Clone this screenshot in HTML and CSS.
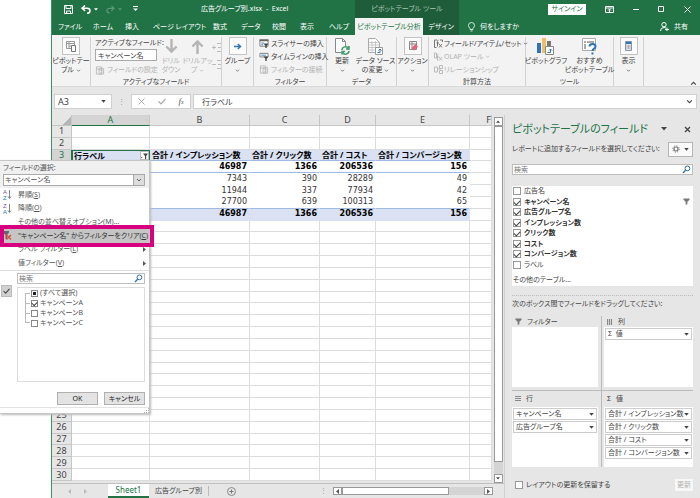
FILE: index.html
```html
<!DOCTYPE html>
<html lang="ja">
<head>
<meta charset="utf-8">
<title>広告グループ別.xlsx - Excel</title>
<link rel="stylesheet" href="styles.css">
</head>
<body>
<svg class="defs" aria-hidden="true">
  <symbol id="chev" viewBox="0 0 6 4"><path d="M1 1l2 2 2-2" fill="none" stroke="currentColor" stroke-width=".9"/></symbol>
  <symbol id="tri" viewBox="0 0 6 4"><path d="M0 0h6L3 3.5z" fill="currentColor"/></symbol>
  <symbol id="lens" viewBox="0 0 9 9"><circle cx="5.4" cy="3.4" r="2.4" fill="none" stroke="#2f6db5"/><path d="M3.6 5.2L1 8" stroke="#2f6db5" stroke-width="1.3"/></symbol>
  <symbol id="funnel" viewBox="0 0 8 8"><path d="M.5.5h7v1.4L5 4.2V7.500H3V4.200L.5 1.900z" fill="#777"/></symbol>
  <symbol id="arrowDown" viewBox="0 0 14 16"><path d="M7 0v13M1.500 8L7 13.500 12.500 8" fill="none" stroke="#b5b5b5" stroke-width="2.600"/></symbol>
  <symbol id="slicer" viewBox="0 0 10 10"><path d="M.5 1h9v7h-9z" fill="#fff" stroke="#777"/><path d="M0 .5h10v2H0z" fill="#666"/><path d="M2 4.500h3M2 6.500h2" stroke="#2f75b5"/><path d="M4.500 5H10L8 7.500V10H6.500V7.500z" fill="#444"/></symbol>
  <symbol id="timeline" viewBox="0 0 10 10"><path d="M.5 1.500h9v4h-9z" fill="#fff" stroke="#777"/><path d="M2 3.500h5" stroke="#2f75b5"/><path d="M4.500 5H10L8 7.500V10H6.500V7.500z" fill="#444"/></symbol>
  <symbol id="faded" viewBox="0 0 10 10"><path d="M1 1h6v8H1zM4 3h5v6H4zM1 3.500h6M5.500 5h2M5.500 7h2" fill="none" stroke="#b9b9b9"/></symbol>
</svg>
<div class="gutter"></div>
<div class="window">
  <header class="head">
    <div class="title-left">
      <div class="quick">
        <button aria-label="上書き保存"><svg width="9" height="9" viewBox="0 0 9 9"><path d="M.5.5h8v8h-8zM2 1v2.500h5V1M2.500 8.500V6h4v2.500" fill="none" stroke="#fff"/></svg></button>
        <button aria-label="元に戻す"><svg width="10" height="9" viewBox="0 0 10 9"><path d="M4 .5L1 3.200l3 2.700M1.500 3.200H6q3 0 3 2.500T6 8.300" fill="none" stroke="#fff" stroke-width="1.500"/></svg><svg width="4" height="3" class="gap"><use href="#tri"/></svg></button>
        <button aria-label="やり直し" class="off"><svg width="9" height="9" viewBox="0 0 10 9"><path d="M6 .5l3 2.700-3 2.700M8.500 3.200H4q-3 0-3 2.500t3 2.600" fill="none" stroke="#5d9a78" stroke-width="1.300"/></svg><svg width="4" height="3" class="gap"><use href="#tri"/></svg></button>
        <button aria-label="カスタマイズ"><svg width="5" height="6" viewBox="0 0 5 6"><path d="M0 .5h5" stroke="#fff"/><path d="M0 2.500h5L2.500 5z" fill="#fff"/></svg></button>
      </div>
      <span>広告グループ別.xlsx&nbsp; - &nbsp;Excel</span>
    </div>
    <div class="title-context">ピボットテーブル ツール</div>
    <div class="title-right">
      <button class="signin">サインイン</button>
      <button aria-label="リボンの表示"><svg width="9" height="7" viewBox="0 0 9 7"><path d="M.5.5h8v6h-8zM.5 2h8M4.500 6V3M3 4.500L4.500 3 6 4.500" fill="none" stroke="#fff"/></svg></button>
      <button aria-label="最小化"><svg width="6" height="7" viewBox="0 0 6 7"><path d="M0 3.500h6" stroke="#fff"/></svg></button>
      <button aria-label="最大化"><svg width="7" height="7" viewBox="0 0 7 7"><path d="M.5.5h5v5h-5z" fill="none" stroke="#fff"/></svg></button>
      <button aria-label="閉じる"><svg width="7" height="7" viewBox="0 0 7 7"><path d="M.5.5l6 6M6.500.5l-6 6" stroke="#fff"/></svg></button>
    </div>
    <nav class="tabs">
      <button>ファイル</button><button>ホーム</button><button>挿入</button><button>ページ レイアウト</button><button>数式</button><button>データ</button><button>校閲</button><button>表示</button><button>ヘルプ</button>
    </nav>
    <nav class="tabs-context"><button class="on">ピボットテーブル分析</button><button>デザイン</button></nav>
    <div class="tabs-right">
      <button><svg width="7" height="10" viewBox="0 0 7 10"><path d="M2 6.500Q.5 5 .5 3.500a3 3 0 0 1 6 0Q6.500 5 5 6.500v1H2zM2.500 9h2" fill="none" stroke="#fff" stroke-width=".8"/></svg>何をしますか</button>
      <button><svg width="9" height="9" viewBox="0 0 9 9"><circle cx="4" cy="2.700" r="2.200" fill="none" stroke="#fff"/><path d="M.5 9Q.5 5.500 4 5.500q1.500 0 2 .7M5 7.500h4M7 5.500v4" fill="none" stroke="#fff"/></svg>共有</button>
    </div>
  </header>

  <section class="ribbon">
    <div class="group">
      <button class="big"><span class="frame"><svg width="11" height="11" viewBox="0 0 11 11"><path d="M.5.500h8v7h-8zM.5 2.500h8M3 .5v7M3 5h6" fill="none" stroke="#999"/><path d="M5.500 4.500h4v6h-4z" fill="#fff" stroke="#777"/></svg></span><span>ピボットテー<br>ブル <svg width="5" height="3"><use href="#chev"/></svg></span></button>
    </div>
    <div class="group">
      <div class="tools">
        <div class="stack active-field">
          <label for="af">アクティブなフィールド:</label>
          <input id="af" value="キャンペーン名">
          <button class="off"><svg width="10" height="9"><use href="#faded"/></svg>フィールドの設定</button>
        </div>
        <button class="big off"><span class="plain"><svg width="13" height="15"><use href="#arrowDown"/></svg></span><span>ドリル<br>ダウン</span></button>
        <button class="big off"><span class="plain"><svg class="flip" width="13" height="15"><use href="#arrowDown"/></svg></span><span>ドリルアッ<br>プ <svg width="5" height="3"><use href="#chev"/></svg></span></button>
        <div class="stack expand">
          <button aria-label="フィールドの展開"><svg width="9" height="9" viewBox="0 0 9 9"><path d="M5 .5h4M5 8.500h4M6 4.500h3M0 4.500h4M2 2.500v4" stroke="#bbb"/></svg></button>
          <button aria-label="フィールドの折りたたみ"><svg width="9" height="9" viewBox="0 0 9 9"><path d="M5 .5h4M5 8.500h4M6 4.500h3M0 4.500h4" stroke="#bbb"/></svg></button>
        </div>
      </div>
      <div class="name">アクティブなフィールド</div>
    </div>
    <div class="group">
      <button class="big"><span class="frame"><svg width="8" height="7" viewBox="0 0 8 7"><path d="M0 3.500h6M3.800 1l2.700 2.500L3.800 6" fill="none" stroke="#2f75b5" stroke-width="1.500"/></svg></span><span>グループ<br><svg width="5" height="3"><use href="#chev"/></svg></span></button>
    </div>
    <div class="group">
      <div class="stack list">
        <button><svg width="10" height="9"><use href="#slicer"/></svg>スライサーの挿入</button>
        <button><svg width="10" height="9"><use href="#timeline"/></svg>タイムラインの挿入</button>
        <button class="off"><svg width="10" height="9"><use href="#faded"/></svg>フィルターの接続</button>
      </div>
      <div class="name">フィルター</div>
    </div>
    <div class="group">
      <div class="tools data">
        <button class="big"><span class="plain"><svg width="16" height="17" viewBox="0 0 16 17"><path d="M1.500.5h7l3 3v11h-10z" fill="#fff" stroke="#888"/><path d="M8.500.5v3h3" fill="none" stroke="#888"/><path d="M7 8h9v9H7z" fill="#f3f3f3"/><path d="M8 12a3.500 3.500 0 0 1 6.500-1.500M15 13a3.500 3.500 0 0 1-6.500 1.500M15 8v3h-3M8 16.500v-3h3" fill="none" stroke="#3d9a68" stroke-width="1.500"/></svg></span><span>更新<br><svg width="5" height="3"><use href="#chev"/></svg></span></button>
        <button class="big"><span class="plain"><svg width="17" height="17" viewBox="0 0 17 17"><path d="M1.500.5h7l4 4v10h-11z" fill="#fff" stroke="#aaa"/><path d="M2 4.500h10M2 7h10M2 9.500h10M2 12h10M5 3v12M8.500 3v12" stroke="#bbb" stroke-width=".8"/><path d="M8.500 9.500h7v7h-7z" fill="#fff" stroke="#999"/><path d="M10.500 14.500h2.500v-3M11.500 12.500l1.500-1.500 1.500 1.500" fill="none" stroke="#2f75b5"/></svg></span><span>データ ソース<br>の変更 <svg width="5" height="3"><use href="#chev"/></svg></span></button>
      </div>
      <div class="name">データ</div>
    </div>
    <div class="group">
      <button class="big"><span class="frame"><svg width="10" height="10" viewBox="0 0 10 10"><path d="M1.500.500h7v8h-7zM1 3h8M4 1v8" fill="none" stroke="#888"/><path d="M3.500 7l4-4L10 5.500 6 9.500z" fill="#e8607a"/></svg></span><span>アクション<br><svg width="5" height="3"><use href="#chev"/></svg></span></button>
    </div>
    <div class="group">
      <div class="stack list calc">
        <button><svg width="9" height="9" viewBox="0 0 9 9"><path d="M.5 1v7.500h2M.5 1H3M4.500 1q-1 0-1 1.500v5M2.500 4h2.500M5 5l3 3.500M8 5L5 8.500M6 1h2.500v2" fill="none" stroke="#777"/></svg>フィールド/アイテム/セット <svg width="5" height="3"><use href="#chev"/></svg></button>
        <button class="off"><svg width="9" height="9" viewBox="0 0 9 9"><path d="M.5 1v5h2V1zM4.500 2q-1 0-1 1.500v5M2.500 5h2.500M5 5l3 3.500M8 5L5 8.500" fill="none" stroke="#bbb"/></svg>OLAP ツール <svg width="5" height="3"><use href="#chev"/></svg></button>
        <button class="off"><svg width="9" height="9" viewBox="0 0 9 9"><path d="M.5 2h3v5h-3zM5.500.5h3v3h-3zM5.500 5.500h3v3h-3zM3.500 4H7" fill="none" stroke="#bbb"/></svg>リレーションシップ</button>
      </div>
      <div class="name">計算方法</div>
    </div>
    <div class="group">
      <div class="tools charts">
        <button class="big"><span class="plain"><svg width="18" height="17" viewBox="0 0 18 17"><path d="M0 5h4v10H0z" fill="#2f75b5"/><path d="M5 0h4v15H5z" fill="#f0c068"/><path d="M10 3h4v5h-4z" fill="#777"/><path d="M8.500 8.500h8v8h-8z" fill="#fff" stroke="#888"/><path d="M10.500 14.500h3v-3M12 12.500l1.500-1.500 1.500 1.500" fill="none" stroke="#2f75b5"/></svg></span><span>ピボットグラフ</span></button>
        <button class="big"><span class="plain"><svg width="17" height="17" viewBox="0 0 17 17"><path d="M1.500.5h13v12h-13z" fill="#fff" stroke="#aaa"/><path d="M3 3h2v2H3zM6 3h7v2H6zM3 6h2v5H3z" fill="#aaa"/><path d="M8.500 8.500q0-2.500 3-2.500t3 2.500q0 1.300-1.500 2.200T11.500 13M11.500 14.500v2" fill="none" stroke="#2f75b5" stroke-width="2"/></svg></span><span>おすすめ<br>ピボットテーブル</span></button>
      </div>
      <div class="name">ツール</div>
    </div>
    <div class="group">
      <button class="big"><span class="frame"><svg width="7" height="10" viewBox="0 0 7 10"><path d="M.5.500h6v9h-6z" fill="#e4e8ee" stroke="#8794a6"/><path d="M1 1h5v2H1z" fill="#2f75b5"/><path d="M1.500 5h4M1.500 7h4" stroke="#777" stroke-dasharray="1 .5"/></svg></span><span>表示<br><svg width="5" height="3"><use href="#chev"/></svg></span></button>
    </div>
    <button class="collapse" aria-label="リボンを折りたたむ"><svg class="flip" width="7" height="5"><use href="#chev"/></svg></button>
  </section>

  <section class="formula">
    <div class="namebox"><input aria-label="名前ボックス" value="A3"><svg width="5" height="3"><use href="#tri"/></svg></div>
    <span class="dots">⋮</span>
    <div class="fx"><svg width="7" height="7" viewBox="0 0 7 7"><path d="M.5.5l6 6M6.500.5l-6 6" stroke="#aaa"/></svg><svg width="8" height="7" viewBox="0 0 8 7"><path d="M.5 3.500L3 6l4.500-5" fill="none" stroke="#aaa" stroke-width="1.200"/></svg><i>f<small>x</small></i></div>
    <div class="fbar"><input aria-label="数式バー" value="行ラベル"><svg width="7" height="5"><use href="#chev"/></svg></div>
  </section>

  <main class="work">
    <div class="sheet">
      <div class="cells">
        <table>
          <colgroup><col class="c0"><col class="ca"><col class="cb"><col class="cc"><col class="cd"><col class="ce"><col></colgroup>
          <thead><tr><th class="corner"></th><th class="sel">A</th><th>B</th><th>C</th><th>D</th><th>E</th><th class="cut">F</th></tr></thead>
          <tbody>
            <tr><th>1</th><td></td><td></td><td></td><td></td><td></td><td></td></tr>
            <tr><th>2</th><td></td><td></td><td></td><td></td><td></td><td></td></tr>
            <tr class="band"><th class="sel">3</th><td class="cursor"><div>行ラベル<button aria-label="フィルター"><svg width="7" height="6" viewBox="0 0 7 6"><path d="M0 4h1.500L.7 5.200zM2 .5h5L5.200 3v3H4V3z" fill="#444"/></svg></button></div></td><td>合計 / インプレッション数</td><td>合計 / クリック数</td><td>合計 / コスト</td><td>合計 / コンバージョン数</td><td></td></tr>
            <tr class="num sum"><th></th><td></td><td>46987</td><td>1366</td><td>206536</td><td>156</td><td></td></tr>
            <tr class="num"><th></th><td></td><td>7343</td><td>390</td><td>28289</td><td>49</td><td></td></tr>
            <tr class="num"><th></th><td></td><td>11944</td><td>337</td><td>77934</td><td>42</td><td></td></tr>
            <tr class="num last"><th></th><td></td><td>27700</td><td>639</td><td>100313</td><td>65</td><td></td></tr>
            <tr class="num band total"><th></th><td></td><td>46987</td><td>1366</td><td>206536</td><td>156</td><td></td></tr>
            <tr><th></th><td></td><td></td><td></td><td></td><td></td><td></td></tr>
            <tr><th></th><td></td><td></td><td></td><td></td><td></td><td></td></tr>
            <tr><th></th><td></td><td></td><td></td><td></td><td></td><td></td></tr>
            <tr><th></th><td></td><td></td><td></td><td></td><td></td><td></td></tr>
            <tr><th></th><td></td><td></td><td></td><td></td><td></td><td></td></tr>
            <tr><th></th><td></td><td></td><td></td><td></td><td></td><td></td></tr>
            <tr><th></th><td></td><td></td><td></td><td></td><td></td><td></td></tr>
            <tr><th></th><td></td><td></td><td></td><td></td><td></td><td></td></tr>
            <tr><th></th><td></td><td></td><td></td><td></td><td></td><td></td></tr>
            <tr><th></th><td></td><td></td><td></td><td></td><td></td><td></td></tr>
            <tr><th></th><td></td><td></td><td></td><td></td><td></td><td></td></tr>
            <tr><th></th><td></td><td></td><td></td><td></td><td></td><td></td></tr>
            <tr><th></th><td></td><td></td><td></td><td></td><td></td><td></td></tr>
            <tr><th></th><td></td><td></td><td></td><td></td><td></td><td></td></tr>
            <tr><th></th><td></td><td></td><td></td><td></td><td></td><td></td></tr>
            <tr><th></th><td></td><td></td><td></td><td></td><td></td><td></td></tr>
            <tr><th>25</th><td></td><td></td><td></td><td></td><td></td><td></td></tr>
            <tr><th>26</th><td></td><td></td><td></td><td></td><td></td><td></td></tr>
            <tr><th>27</th><td></td><td></td><td></td><td></td><td></td><td></td></tr>
            <tr><th>28</th><td></td><td></td><td></td><td></td><td></td><td></td></tr>
            <tr><th>29</th><td></td><td></td><td></td><td></td><td></td><td></td></tr>
            <tr><th>30</th><td></td><td></td><td></td><td></td><td></td><td></td></tr>
          </tbody>
        </table>
        <div class="vscroll">
          <button aria-label="上へ"><svg class="flip" width="4" height="3"><use href="#tri"/></svg></button>
          <div class="thumb"></div><div class="track"></div>
          <button aria-label="下へ"><svg width="4" height="3"><use href="#tri"/></svg></button>
        </div>
      </div>
      <div class="sheetbar">
        <button class="mini" aria-label="前のシート"><svg width="3" height="5" viewBox="0 0 3 5"><path d="M3 0v5L0 2.500z" fill="#bbb"/></svg></button>
        <button class="mini" aria-label="次のシート"><svg width="3" height="5" viewBox="0 0 3 5"><path d="M0 0v5l3-2.500z" fill="#bbb"/></svg></button>
        <button class="stab on">Sheet1</button>
        <button class="stab other">広告グループ別</button>
        <button class="add" aria-label="新しいシート"><svg width="9" height="9" viewBox="0 0 9 9"><circle cx="4.500" cy="4.500" r="4" fill="none" stroke="#888"/><path d="M4.500 2.500v4M2.500 4.500h4" stroke="#777"/></svg></button>
        <span class="dots">⋮</span>
        <div class="hscroll">
          <button aria-label="左へ"><svg width="3" height="5" viewBox="0 0 3 5"><path d="M3 0v5L0 2.500z" fill="#555"/></svg></button>
          <div class="thumb"></div><div class="track"></div>
          <button aria-label="右へ"><svg width="3" height="5" viewBox="0 0 3 5"><path d="M0 0v5l3-2.500z" fill="#555"/></svg></button>
        </div>
      </div>
    </div>

    <aside class="pane">
      <div class="pane-head">
        <h2>ピボットテーブルのフィールド</h2>
        <button aria-label="オプション"><svg width="6" height="4"><use href="#tri"/></svg></button>
        <button aria-label="閉じる"><svg width="7" height="7" viewBox="0 0 7 7"><path d="M1 1l5 5M6 1L1 6" stroke="#444" stroke-width="1.300"/></svg></button>
      </div>
      <div class="pane-sub">
        <span>レポートに追加するフィールドを選択してください:</span>
        <button class="gear" aria-label="ツール"><svg width="8" height="8" viewBox="0 0 8 8"><circle cx="4" cy="4" r="2" fill="none" stroke="#777" stroke-width="1.200"/><circle cx="4" cy="4" r="3.200" fill="none" stroke="#777" stroke-dasharray="1.300 1.200"/></svg><svg width="5" height="3"><use href="#tri"/></svg></button>
      </div>
      <div class="search"><input aria-label="フィールドの検索" placeholder="検索"><svg width="9" height="9"><use href="#lens"/></svg></div>
      <div class="fields">
        <div class="field-list">
          <label><input type="checkbox">広告名</label>
          <label class="b"><input type="checkbox" checked>キャンペーン名<svg width="7" height="7"><use href="#funnel"/></svg></label>
          <label class="b"><input type="checkbox" checked>広告グループ名</label>
          <label class="b"><input type="checkbox" checked>インプレッション数</label>
          <label class="b"><input type="checkbox" checked>クリック数</label>
          <label class="b"><input type="checkbox" checked>コスト</label>
          <label class="b"><input type="checkbox" checked>コンバージョン数</label>
          <label><input type="checkbox">ラベル</label>
        </div>
        <a href="#">その他のテーブル...</a>
      </div>
      <p class="hint">次のボックス間でフィールドをドラッグしてください:</p>
      <div class="areas">
        <section><h3><svg width="7" height="7"><use href="#funnel"/></svg>フィルター</h3><div class="box"></div></section>
        <section><h3><svg width="6" height="6" viewBox="0 0 6 6"><path d="M.5 0v6M2.500 0v6M4.500 0v6" stroke="#888" stroke-width="1.200"/></svg>列</h3><div class="box"><button><span>Σ&nbsp; 値</span><svg width="5" height="3"><use href="#tri"/></svg></button></div></section>
        <section><h3><svg width="6" height="6" viewBox="0 0 6 6"><path d="M0 .5h6M0 2.500h6M0 4.500h6" stroke="#888" stroke-width="1.200"/></svg>行</h3><div class="box"><button><span>キャンペーン名</span><svg width="5" height="3"><use href="#tri"/></svg></button><button><span>広告グループ名</span><svg width="5" height="3"><use href="#tri"/></svg></button></div></section>
        <section><h3><span>Σ</span>値</h3><div class="box"><button><span>合計 / インプレッション数</span><svg width="5" height="3"><use href="#tri"/></svg></button><button><span>合計 / クリック数</span><svg width="5" height="3"><use href="#tri"/></svg></button><button><span>合計 / コスト</span><svg width="5" height="3"><use href="#tri"/></svg></button><button><span>合計 / コンバージョン数</span><svg width="5" height="3"><use href="#tri"/></svg></button></div></section>
      </div>
      <div class="pane-foot"><label><input type="checkbox">レイアウトの更新を保留する</label><button disabled>更新</button></div>
    </aside>
  </main>
  <footer class="status"></footer>
</div>

<div class="menu">
  <div class="menu-head">
    <label for="fs">フィールドの選択:</label>
    <div class="combo"><select id="fs"><option>キャンペーン名</option></select><span><svg width="6" height="4"><use href="#chev"/></svg></span></div>
  </div>
  <div class="items">
    <button><svg width="9" height="11" viewBox="0 0 9 11"><text x="0" y="5" class="za">A</text><text x="0" y="11" class="zb">Z</text><path d="M6.500 1v8M5 7.500L6.500 9.500 8 7.500" fill="none" stroke="#777" stroke-width=".9"/></svg><span>昇順(<u>S</u>)</span></button>
    <button><svg width="9" height="11" viewBox="0 0 9 11"><text x="0" y="5" class="za">Z</text><text x="0" y="11" class="zb">A</text><path d="M6.500 1v8M5 7.500L6.500 9.500 8 7.500" fill="none" stroke="#777" stroke-width=".9"/></svg><span>降順(<u>O</u>)</span></button>
    <button><i></i><span>その他の並べ替えオプション(<u>M</u>)...</span></button>
    <button class="clear"><svg width="9" height="9" viewBox="0 0 9 9"><path d="M0 0h6v1.500L4 4v4H2.500V4L0 1.500z" fill="#666"/><path d="M3.500 4l4.500 4.500M8 4L3.500 8.500" stroke="#d8503a" stroke-width="1.300"/></svg><span>"キャンペーン名" からフィルターをクリア(<u>C</u>)</span></button>
    <button><i></i><span>ラベル フィルター(<u>L</u>)</span><svg class="sub" width="3" height="5" viewBox="0 0 3 5"><path d="M0 0v5l3-2.500z" fill="#555"/></svg></button>
    <button><i></i><span>値フィルター(<u>V</u>)</span><svg class="sub" width="3" height="5" viewBox="0 0 3 5"><path d="M0 0v5l3-2.500z" fill="#555"/></svg></button>
  </div>
  <div class="picker">
    <span class="tick"><svg width="7" height="6" viewBox="0 0 8 7"><path d="M.5 3.500L3 6l4.500-5" fill="none" stroke="#444" stroke-width="1.200"/></svg></span>
    <div class="picker-main">
      <div class="search"><input aria-label="項目の検索" placeholder="検索"><svg width="9" height="9"><use href="#lens"/></svg></div>
      <div class="tree">
        <label class="root"><input type="checkbox" class="mixed">(すべて選択)</label>
        <label><input type="checkbox" checked>キャンペーンA</label>
        <label><input type="checkbox">キャンペーンB</label>
        <label><input type="checkbox">キャンペーンC</label>
      </div>
      <div class="actions"><button>OK</button><button>キャンセル</button></div>
    </div>
  </div>
  <div class="grip"><svg width="5" height="5" viewBox="0 0 5 5"><path d="M4 0h1v1H4zM2 2h1v1H2zM4 2h1v1H4zM0 4h1v1H0zM2 4h1v1H2zM4 4h1v1H4z" fill="#aaa"/></svg></div>
</div>
</body>
</html>
```
FILE: styles.css
```css
* { box-sizing: border-box; }
body {
  margin: 0;
  min-height: 100vh;
  display: flex;
  position: relative;
  background: #fff;
  color: #444;
  font: 7px/10px "Noto Sans", "Noto Sans CJK JP", sans-serif;
  font-feature-settings: "palt";
}
.defs { position: absolute; width: 0; height: 0; }
button, input, select { font: inherit; font-feature-settings: inherit; color: inherit; margin: 0; padding: 0; border: 0; background: none; border-radius: 0; outline: 0; min-width: 0; }
button { display: flex; align-items: center; white-space: nowrap; }
svg { flex: none; }
h2, h3, p { margin: 0; font-weight: normal; }
.flip { transform: rotate(180deg); }
.off { color: #b1b1b1; }
.gutter { flex: 0 0 51px; }
.window { flex: 1; min-width: 0; border-left: 1px solid #3f8f65; display: flex; flex-direction: column; background: #e6e6e6; }

/* title bar and tabs */
.head { display: grid; grid-template-columns: 303px 104px 1fr; grid-template-rows: 18px 17px; background: #217346; color: #fff; }
.title-left { display: flex; align-items: center; }
.quick { display: flex; gap: 8px; padding-left: 12px; width: 149px; }
.quick .gap { margin-left: 3px; }
.quick button:last-child { margin-left: 3px; }
.head .off { color: #5d9a78; }
.title-context, .tabs-context { background: #1e5c3a; }
.title-context { display: flex; align-items: center; justify-content: center; color: #a9c7b6; }
.title-right { display: flex; align-items: center; justify-content: flex-end; gap: 19px; padding-right: 9px; }
.signin { background: #fff; color: #217346; width: 38px; height: 11px; justify-content: center; }
.tabs { display: grid; grid-template-columns: 35px 32px 28px 60px 28px 31px 28px 29px 1fr; padding-left: 6px; }
.tabs-context { display: grid; grid-template-columns: 68px 1fr; }
.tabs-context button { justify-content: center; }
.tabs-context .on { background: #f3f3f3; color: #217346; }
.tabs-right { display: flex; justify-content: space-between; padding: 0 12px 0 9px; }
.tabs-right button { gap: 5px; }

/* ribbon */
.ribbon { display: grid; grid-template-columns: 39px 131px 32px 73px 70px 32px 97px 88px 30px 1fr; height: 52px; background: #f3f3f3; border-bottom: 1px solid #dadada; padding-top: 2px; }
.group { border-right: 1px solid #d2d2d2; margin-bottom: 2px; display: flex; flex-direction: column; justify-content: space-between; min-width: 0; }
.name { text-align: center; line-height: 9px; }
.tools { display: grid; grid-template-columns: 64px 24px 29px 1fr; padding-left: 4px; }
.tools.data { grid-template-columns: 26px 1fr; padding-left: 2px; }
.tools.charts { grid-template-columns: 40px 1fr; padding-left: 0; }
.big { flex-direction: column; justify-content: flex-start; align-items: center; text-align: center; gap: 1px; line-height: 9px; }
.big svg { vertical-align: middle; }
.frame, .plain { width: 18px; height: 18px; display: flex; align-items: center; justify-content: center; }
.frame { border: 1px solid #c3c3c3; background: #fbfbfb; }
.stack { display: flex; flex-direction: column; }
.active-field label { height: 12px; line-height: 12px; }
.active-field input { width: 62px; height: 12px; border: 1px solid #aaa; background: #fff; padding-left: 2px; }
.active-field button { gap: 2px; height: 16px; padding-top: 2px; }
.expand { gap: 8px; padding-top: 6px; }
.list { padding-left: 5px; }
.list button { height: 13px; gap: 2px; }
.list.calc button { gap: 1px; }
.collapse { justify-self: end; align-self: end; padding: 0 3px 2px; }

/* formula bar */
.formula { display: grid; grid-template-columns: 58px 15px 60px 1fr; gap: 2px; padding: 7px 3px 6px 2px; align-items: center; }
.namebox, .fx, .fbar { height: 15px; background: #fff; border: 1px solid #cfcfcf; display: flex; align-items: center; }
.namebox { padding: 0 5px 0 3px; font-size: 9px; }
.namebox input, .fbar input { flex: 1; width: 0; }
.dots { text-align: center; color: #999; }
.fx { justify-content: space-around; color: #555; font: 9px/12px "Liberation Serif", serif; }
.fx small { font-size: 6px; }
.fbar { padding: 0 3px 0 8px; font-size: 8px; }

/* grid */
.work { flex: 1; display: flex; min-height: 0; }
.sheet { flex: 1; min-width: 0; display: flex; flex-direction: column; }
.cells { flex: 1; display: flex; height: 366px; }
table { flex: 1; width: 0; height: 366px; table-layout: fixed; border-collapse: separate; border-spacing: 0; background: #fff; font-size: 8px; line-height: 10px; color: #000; }
.c0 { width: 20px; }
.ca { width: 78px; }
.cb { width: 100px; }
.cc { width: 70px; }
.cd { width: 56px; }
.ce { width: 94px; }
tr { height: 11px; }
th, td { padding: 0; border-right: 1px solid #dcdcdc; border-bottom: 1px solid #dcdcdc; white-space: nowrap; }
th { background: #e6e6e6; color: #444; font-weight: normal; font-size: 9px; border-color: #c6c6c6; }
th.sel { background: #d4d4d4; color: #217346; }
thead th.sel { border-bottom-color: #217346; }
tbody th.sel { border-right-color: #217346; }
.cut { text-align: right; }
.corner { background: linear-gradient(135deg, #e6e6e6 70%, #b5b5b5 70%); }
td { padding: 0 2px; }
.band td { background: #d9e1f2; font-weight: bold; border-right-color: #d9e1f2; border-bottom-color: #9fb9e0; }
.num td { text-align: right; font-family: "DejaVu Sans", sans-serif; border-color: #fff; color: #333; }
.sum td, .total td { font-weight: bold; color: #000; border-bottom-color: #9fb9e0; }
.last td { border-bottom-color: #9fb9e0; }
.band.total td { border-color: #d9e1f2; }
.band td:last-child, .num td:last-child, .band.total td:last-child { background: #fff; border-color: #dcdcdc; }
td.cursor { padding: 0; border: 1px solid #217346; }
.band td.cursor { border-color: #217346; }
.cursor div { display: flex; align-items: center; justify-content: space-between; padding-left: 1px; height: 9px; }
.cursor button { width: 9px; height: 9px; background: #fff; border: 1px solid #bbb; }
.vscroll { width: 12px; display: flex; flex-direction: column; align-items: center; padding: 2px 1px 0; }
.vscroll button { width: 9px; height: 9px; background: #fff; border: 1px solid #999; justify-content: center; }
.vscroll .thumb { flex: 1; width: 9px; background: #fff; border: 1px solid #999; }
.vscroll .track { height: 12px; width: 9px; background: #d4d4d4; }
.sheetbar { display: grid; grid-template-columns: 16px 16px 56px 60px 44px 1fr 177px; height: 15px; padding-left: 9px; border-top: 1px solid #c0c0c0; }
.sheetbar button { justify-content: center; }
.stab.on { background: #fff; color: #217346; border-bottom: 2px solid #217346; margin-left: 15px; font-size: 8px; }
.sheetbar .dots { text-align: right; line-height: 13px; }
.stab.other { margin: 2px 0; border-right: 1px solid #bbb; }
.hscroll { display: flex; margin: 3px 0 3px 6px; padding-right: 11px; }
.hscroll button { width: 9px; border: 1px solid #999; background: #fff; }
.hscroll .thumb { width: 107px; border: 1px solid #999; background: #fff; }
.hscroll .track { flex: 1; background: #d4d4d4; }

/* field pane */
.pane { flex: 0 0 196px; min-width: 0; border-left: 1px solid #cfcfcf; padding: 4px 7px 0; display: flex; flex-direction: column; }
.pane-head { display: flex; align-items: center; gap: 17px; height: 20px; padding-right: 2px; }
.pane-head h2 { flex: 1; min-width: 0; font-size: 11px; line-height: 18px; color: #217346; white-space: nowrap; }
.pane-sub { display: flex; justify-content: space-between; align-items: center; height: 20px; white-space: nowrap; }
.gear { width: 25px; height: 15px; border: 1px solid #b5b5b5; background: #fafafa; justify-content: center; gap: 4px; }
.search { display: flex; align-items: center; height: 11px; background: #fff; border: 1px solid #bdbdbd; padding: 0 1px; }
.search input { flex: 1; width: 0; }
.search input::placeholder { color: #777; }
.pane > .search { margin-top: 5px; }
.fields { background: #fff; margin-top: 11px; height: 100px; padding: 0 1px 0; display: flex; flex-direction: column; justify-content: space-between; }
.field-list { display: grid; grid-template-rows: repeat(8, 1fr); height: 84px; }
label { white-space: nowrap; }
.field-list label { display: flex; align-items: center; gap: 3px; }
.field-list label svg { margin-left: auto; margin-right: 2px; }
.b { font-weight: bold; color: #333; }
.fields a { color: inherit; text-decoration: none; line-height: 12px; }
input[type="checkbox"] { appearance: none; width: 8px; height: 8px; border: 1px solid #999; background: #fff; display: flex; align-items: center; justify-content: center; flex: none; }
input[type="checkbox"]:checked::after { content: ""; width: 5px; height: 3px; border: solid #444; border-width: 0 0 1px 1px; transform: rotate(-45deg); }
.hint { border-top: 1px dotted #bbb; margin-top: 9px; padding-top: 2px; line-height: 12px; white-space: nowrap; }
.areas { display: grid; grid-template-columns: 90px 1fr; grid-template-rows: 75px 76px; margin-top: 6px; }
.areas section { display: flex; flex-direction: column; padding-right: 3px; min-width: 0; }
.areas section:nth-child(odd) { border-right: 1px solid #bbb; }
.areas section:nth-child(even) { padding: 0 0 0 2px; }
.areas section:nth-child(-n+2) { border-bottom: 1px solid #bbb; padding-bottom: 3px; }
.areas h3 { display: flex; align-items: center; gap: 5px; padding-left: 3px; height: 11px; font-size: 7px; }
.areas section:nth-child(n+3) h3 { height: 16px; }
.box { flex: 1; background: #fff; padding: 1px; }
.box button { width: 100%; height: 12px; margin-bottom: 1px; border: 1px solid #ccc; padding: 0 2px; justify-content: space-between; }
.pane-foot { display: flex; align-items: center; justify-content: space-between; height: 27px; margin-top: 4px; }
.pane-foot label { display: flex; align-items: center; gap: 3px; padding-left: 3px; }
.pane-foot button { background: #f7f7f7; color: #b1b1b1; width: 18px; height: 12px; justify-content: center; }
.status { height: 3px; border-top: 1px solid #c6c6c6; }

/* filter menu */
.menu { position: absolute; left: 0; top: 160px; width: 150px; background: #fff; border: 1px solid #c6c6c6; border-left: 0; box-shadow: 1px 1px 2px #bbb; color: #555; }
.menu-head { background: #f0f0f0; height: 27px; padding: 1px 4px 0 3px; }
.menu-head label { display: block; line-height: 12px; }
.combo { display: flex; height: 12px; border: 1px solid #aaa; background: #fff; }
.combo select { appearance: none; flex: 1; padding-left: 1px; }
.combo span { width: 11px; display: flex; align-items: center; justify-content: center; background: #ddd; border-left: 1px solid #aaa; }
.items { display: grid; grid-template-rows: repeat(6, 1fr); height: 83px; border-bottom: 1px solid #ddd; }
.items button { display: grid; grid-template-columns: 15px 1fr 6px; padding-left: 3px; text-align: left; }
.items .clear { position: relative; background: #c5c5c5; color: #333; }
.clear::after { content: ""; position: absolute; inset: -4px -5px -4px 0; border: 4px solid #d6007f; }
.za { font: 6px "Liberation Sans", sans-serif; fill: #7c51a1; }
.zb { font: 6px "Liberation Sans", sans-serif; fill: #2f75b5; }
.picker { display: grid; grid-template-columns: 17px 1fr; padding: 2px 4px 0 0; }
.tick { width: 11px; height: 12px; margin: 12px 0 0 1px; background: #d0d0d0; border: 1px solid #bbb; display: flex; align-items: center; justify-content: center; }
.tree { margin-top: 3px; height: 95px; border: 1px solid #ddd; padding-left: 7px; }
.tree label { display: grid; grid-template-columns: 5px 8px 1fr; gap: 0 1px; align-items: center; height: 10px; }
.tree label::before { content: ""; height: 10px; border-left: 1px solid #bbb; background: linear-gradient(#bbb, #bbb) 0 5px / 100% 1px no-repeat; }
.tree label.root::before { height: 5px; align-self: end; background-position: 0 0; }
.tree label:last-child::before { height: 5px; align-self: start; background-position: 0 4px; }
.tree input[type="checkbox"] { border-color: #888; height: 7px; width: 7px; }
.tree .mixed::after { content: ""; width: 3px; height: 3px; background: #222; }
.actions { display: grid; grid-template-columns: 41px 41px; gap: 6px; justify-content: end; margin-top: 10px; }
.actions button { height: 13px; background: #e3e3e3; border: 1px solid #b0b0b0; justify-content: center; color: #222; }
.grip { display: flex; justify-content: flex-end; align-items: flex-end; height: 6px; margin-top: 2px; border-top: 1px solid #e3e3e3; }
```
